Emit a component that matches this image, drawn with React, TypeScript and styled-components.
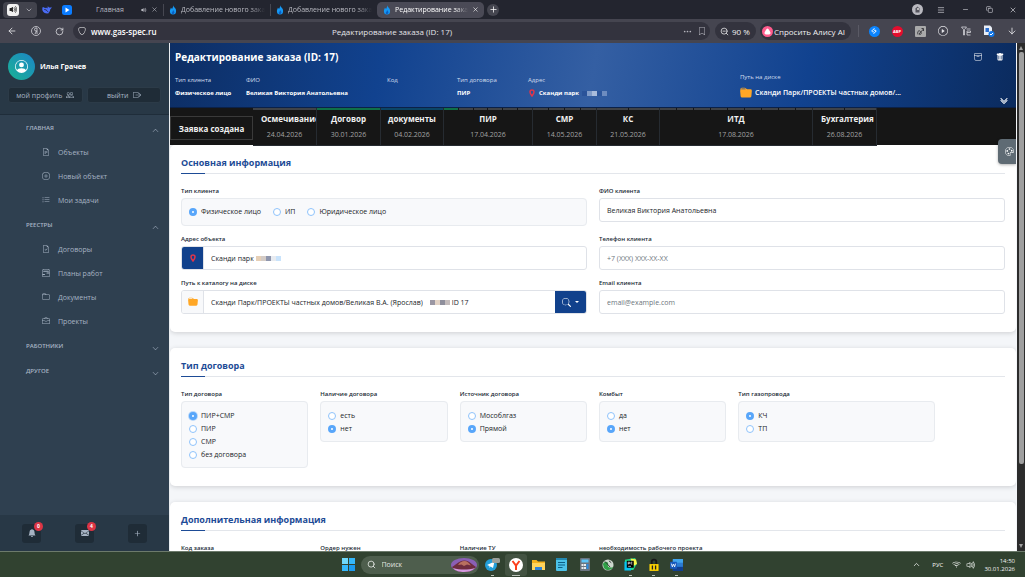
import React, {useState} from 'react';
import styled, {createGlobalStyle} from 'styled-components';
import {
    BsPersonCircle, BsPeople, BsBoxArrowRight, BsFileEarmarkText, BsPlusCircle, BsListUl,
    BsFileEarmarkCheck, BsCalendar2Range, BsFolder, BsBriefcase, BsChevronUp, BsChevronDown,
    BsBellFill, BsEnvelopeFill, BsPlus, BsPalette, BsFolderFill, BsSearch, BsArchive,
    BsTrashFill, BsChevronDoubleDown, BsBookmark, BsThreeDots, BsShield, BsWifi, BsVolumeUp,
    BsVolumeUpFill, BsPlayCircle
} from 'react-icons/bs';
import {ArrowLeft, RotateCw, X, Plus, Menu, Minus, ZoomOut, ArrowDown, Copy, ChevronDown, ChevronUp, Search} from 'lucide-react';

const GlobalStyle = createGlobalStyle`
    * { box-sizing: border-box; }
    body { margin: 0; background: #f4f6f9; }
    body, button, input { font-family: "Open Sans", "Noto Sans", sans-serif; }
    button { border: 0; padding: 0; background: none; color: inherit; cursor: pointer; }
    a { color: inherit; text-decoration: none; }
    h1, h2, p, ul, fieldset, legend { margin: 0; padding: 0; border: 0; }
    svg { flex-shrink: 0; display: block; }
`

const Screen = styled.div`
    display: flex;
    flex-direction: column;
    height: 100vh;
    overflow: hidden;
`

/* browser chrome */

const TabBar = styled.div`
    display: flex;
    align-items: center;
    height: 19px;
    flex-shrink: 0;
    padding: 0 7px 0 3px;
    background: #23252f;
    color: #d6d6dc;
    font-size: 7px;
`

const SoundGroup = styled.button`
    display: flex;
    align-items: center;
    gap: 6px;
    height: 16px;
    padding: 0 4px;
    border-radius: 4px;
    background: #42434d;
    color: #c9c9cf;
`

const SoundBox = styled.span`
    display: flex;
    align-items: center;
    justify-content: center;
    width: 12px;
    height: 12px;
    border-radius: 3px;
    background: #f1f1f1;
    color: #222;
`

const PinnedTab = styled.button`
    display: flex;
    justify-content: center;
    width: 20px;
`

const Tab = styled.div<{$active?: boolean; $short?: boolean}>`
    display: flex;
    align-items: center;
    gap: 4px;
    width: ${p => p.$short ? 86 : 107}px;
    height: 16px;
    padding: 0 5px 0 6px;
    border-radius: ${p => p.$active ? "5px" : "0"};
    background: ${p => p.$active ? "#4a4a56" : "transparent"};
    color: ${p => p.$active ? "#fff" : "#b9bac2"};
`

const TabDivider = styled.span`
    width: 1px;
    height: 12px;
    margin-right: -1px;
    background: #464751;
`

const TabTitle = styled.span<{$center?: boolean}>`
    flex: 1;
    min-width: 0;
    overflow: hidden;
    white-space: nowrap;
    text-align: ${p => p.$center ? "center" : "left"};
    mask-image: ${p => p.$center ? "none" : "linear-gradient(90deg, #000 82%, transparent)"};
`

const NewTab = styled.button`
    display: flex;
    align-items: center;
    justify-content: center;
    width: 12px;
    height: 12px;
    margin-left: 3px;
    border-radius: 50%;
    background: #454650;
    color: #fff;
`

const WindowButtons = styled.div`
    display: flex;
    align-items: center;
    gap: 14px;
    margin-left: auto;
    & > button{
        width: 10px;
        display: flex;
        justify-content: center;
    }
`

const Toolbar = styled.div`
    display: flex;
    align-items: center;
    height: 24px;
    flex-shrink: 0;
    padding: 0 7px 0 0;
    background: #454550;
    color: #e4e4e8;
    font-size: 8px;
`

const NavButtons = styled.div`
    display: flex;
    width: 73px;
    padding: 0 7px;
    gap: 14px;
    & > button{
        width: 10px;
    }
`

const AddressBar = styled.div`
    display: grid;
    grid-template-columns: 1fr auto 1fr;
    align-items: center;
    flex: 1;
    height: 18px;
    margin-right: 5px;
    padding: 0 4px 0 5px;
    border-radius: 9px;
    background: #33333e;
`

const Host = styled.span`
    display: flex;
    align-items: center;
    gap: 5px;
    color: #fff;
    font-weight: 600;
`

const BarTools = styled.span`
    display: flex;
    justify-content: flex-end;
    gap: 6px;
    color: #b4b4bc;
`

const Pill = styled.button`
    display: flex;
    align-items: center;
    gap: 3px;
    height: 18px;
    padding: 0 6px 0 5px;
    margin-right: 4px;
    border-radius: 9px;
    background: #33333e;
    color: #f0f0f2;
    font-size: 8px;
    white-space: nowrap;
`

const AlisaPill = styled(Pill)`
    gap: 1px;
    padding: 0 6px 0 2px;
`

const AlisaDot = styled.span`
    display: flex;
    align-items: center;
    justify-content: center;
    width: 11px;
    height: 11px;
    border-radius: 50%;
    background: #ff5c8d;
`

const Extensions = styled.div`
    display: flex;
    align-items: center;
    gap: 11px;
    padding-left: 9px;
    border-left: 1px solid #5a5a65;
    margin-left: 3px;
    & > button{
        width: 12px;
        display: flex;
        justify-content: center;
    }
`

const RoundBadge = styled.span<{$bg: string}>`
    display: flex;
    align-items: center;
    justify-content: center;
    width: 11px;
    height: 11px;
    flex-shrink: 0;
    border-radius: 50%;
    background: ${p => p.$bg};
    color: #fff;
    font-size: 4px;
    font-weight: 700;
`

/* page */

const Page = styled.div`
    display: flex;
    flex: 1;
    min-height: 0;
`

const Sidebar = styled.aside`
    display: flex;
    flex-direction: column;
    width: 170px;
    flex-shrink: 0;
    border-right: 1px solid #e9edf0;
    background: #2f4050;
    color: #a7b4c4;
    font-size: 7px;
`

const Profile = styled.div`
    padding: 10px 8px 11px;
    border-bottom: 1px solid #1f2d3a;
    background: #283846;
`

const ProfileName = styled.div`
    display: flex;
    align-items: center;
    gap: 5px;
    color: #fff;
    font-weight: 700;
`

const Avatar = styled.span`
    display: flex;
    align-items: center;
    justify-content: center;
    width: 27px;
    height: 27px;
    border-radius: 50%;
    background: linear-gradient(45deg, #1ab394, #1c84c6);
    color: #fff;
`

const ProfileButtons = styled.div`
    display: grid;
    grid-template-columns: 1fr 1fr;
    gap: 4px;
    margin-top: 7px;
    & > button{
        display: flex;
        align-items: center;
        justify-content: center;
        gap: 4px;
        height: 16px;
        border: 1px solid #2c3b48;
        border-radius: 3px;
        background: #1f2c37;
        color: #a7b4c4;
        font-size: 7px;
    }
`

const Menubar = styled.nav`
    flex: 1;
`

const MenuHead = styled.button`
    display: flex;
    align-items: center;
    justify-content: space-between;
    width: 100%;
    height: 25px;
    padding: 0 10px 0 26px;
    font-size: 6px;
    font-weight: 600;
    & > svg{
        margin-top: 6px;
    }
`

const MenuItem = styled.a`
    display: flex;
    align-items: center;
    gap: 8px;
    height: 24px;
    padding-left: 42px;
    font-size: 7px;
`

const SideFooter = styled.div`
    display: flex;
    align-items: center;
    justify-content: space-between;
    height: 36px;
    padding: 0 22px;
    background: #283846;
`

const SideButton = styled.button`
    position: relative;
    display: flex;
    align-items: center;
    justify-content: center;
    width: 19px;
    height: 19px;
    border-radius: 3px;
    background: #1f2c37;
    color: #a7b4c4;
`

const Badge = styled.span`
    position: absolute;
    top: -2px;
    right: -2px;
    width: 9px;
    height: 9px;
    border-radius: 50%;
    background: #dc3545;
    color: #fff;
    font-size: 5px;
    font-weight: 700;
    line-height: 9px;
    text-align: center;
`

const Main = styled.main`
    position: relative;
    flex: 1;
    min-width: 0;
    overflow: hidden;
    margin-right: 1px;
    background: #f4f6f9;
`

const OrderHeader = styled.header`
    height: 65px;
    padding: 7px 0 0 5px;
    border-bottom: 1px solid #0b2148;
    background: linear-gradient(100deg, #0d2e64 0%, #11428f 25%, #345fa3 50%, #11428f 75%, #0b2b5e 100%);
    color: #fff;
`

const TitleRow = styled.div`
    display: flex;
    justify-content: space-between;
    align-items: center;
    padding-right: 12px;
    & > h1{
        font-size: 10px;
        line-height: 14px;
        font-weight: 700;
    }
`

const HeaderTools = styled.div`
    display: flex;
    gap: 14px;
`

const Summary = styled.div`
    display: grid;
    grid-template-columns: 71fr 141fr 70fr 71fr 212fr 276fr;
    margin-top: 11px;
`

const SummaryCell = styled.div`
    font-size: 6px;
    font-weight: 700;
    line-height: 14px;
    white-space: nowrap;
    & > p{
        color: #d3deee;
        font-size: 6px;
        font-weight: 400;
        line-height: 11px;
    }
    & > a, & > span{
        display: flex;
        align-items: center;
        gap: 3px;
    }
`

const DiskCell = styled(SummaryCell)`
    position: relative;
    font-size: 7px;
    font-weight: 600;
    & > p{
        margin: -3px 0 3px;
    }
`

const Expand = styled.button`
    position: absolute;
    right: 8px;
    bottom: -5px;
    & > svg{
        stroke: currentColor;
        stroke-width: 1;
    }
`

const Mosaic = styled.span`
    display: flex;
`

const MosaicCell = styled.i<{$color: string}>`
    width: 5px;
    height: 5px;
    background: ${p => p.$color};
`

const Stages = styled.div`
    display: flex;
    height: 37px;
    background: #161616;
    color: #f1f1f1;
`

const StartStage = styled.div`
    display: flex;
    align-items: center;
    justify-content: center;
    width: 83px;
    height: 24px;
    margin-top: 8px;
    border: 1px solid #3a3a3a;
    font-size: 8px;
    font-weight: 700;
`

const Stage = styled.div<{$width: number}>`
    display: flex;
    flex-direction: column;
    width: ${p => p.$width}px;
    height: 38px;
    overflow: hidden;
    border: 1px solid #262b31;
    border-width: 0 1px 1px 0;
    background: #161616;
    text-align: center;
    white-space: nowrap;
    & > strong{
        font-size: 8px;
        line-height: 16px;
        font-weight: 700;
    }
    & > time{
        color: #a3a3a3;
        font-size: 7px;
        line-height: 16px;
    }
`

const LongTitle = styled.strong`
    padding-left: 8px;
    text-align: left;
`

const Progress = styled.div`
    display: flex;
    gap: 1px;
    height: 2px;
    margin-bottom: 1px;
`

const Segment = styled.i<{$color: string}>`
    flex: 1;
    background: ${p => p.$color};
`

const ThemeButton = styled.button`
    position: absolute;
    top: 96px;
    right: 0;
    display: flex;
    align-items: center;
    justify-content: center;
    width: 18px;
    height: 25px;
    padding-left: 5px;
    border-radius: 4px 0 0 4px;
    background: #5f6b74;
    color: #fff;
    box-shadow: 0 1px 3px rgba(0, 0, 0, .3);
`

const Card = styled.section`
    margin-bottom: 16px;
    padding: 10px 11px 18px;
    border-radius: 5px;
    background: #fff;
    box-shadow: 0 1px 5px rgba(0, 0, 0, .16);
`

const CardTitle = styled.h2`
    position: relative;
    margin-bottom: 11px;
    padding-bottom: 3px;
    border-bottom: 1px solid #e3e6eb;
    color: #1d4b96;
    font-size: 9px;
    line-height: 15px;
    font-weight: 700;
    &::after{
        content: "";
        position: absolute;
        left: 0;
        bottom: -1px;
        width: 24px;
        height: 1px;
        background: #1d4b96;
    }
`

const FormGrid = styled.div`
    display: grid;
    grid-template-columns: repeat(12, minmax(0, 1fr));
    gap: 7px 12px;
    align-items: start;
`

const Field = styled.div<{$span: number}>`
    grid-column: span ${p => p.$span};
    min-width: 0;
`

const Label = styled.label`
    display: block;
    margin-bottom: 1px;
    color: #212b36;
    font-size: 6px;
    line-height: 12px;
    font-weight: 600;
    white-space: nowrap;
`

const TextInput = styled.input`
    display: block;
    width: 100%;
    height: 24px;
    padding: 0 7px;
    border: 1px solid #dfe2e8;
    border-radius: 3px;
    background: #fff;
    color: #212529;
    font-size: 7px;
    outline: none;
    &::placeholder{
        color: #6c757d;
    }
`

const InputGroup = styled.div`
    display: flex;
    align-items: center;
    gap: 2px;
    height: 24px;
    overflow: hidden;
    border: 1px solid #dfe2e8;
    border-radius: 3px;
    background: #fff;
    color: #212529;
    font-size: 7px;
    & > input{
        field-sizing: content;
        border: 0;
        padding: 0;
        color: inherit;
        font-size: 7px;
        outline: none;
    }
`

const Addon = styled.span<{$dark?: boolean}>`
    display: flex;
    align-items: center;
    justify-content: center;
    align-self: stretch;
    width: 22px;
    margin-right: 5px;
    border-right: 1px solid #dfe2e8;
    background: ${p => p.$dark ? "#11418c" : "#f8f9fb"};
    color: #ffa726;
`

const SearchButton = styled.button`
    display: flex;
    align-items: center;
    justify-content: center;
    gap: 4px;
    align-self: stretch;
    width: 31px;
    margin-left: auto;
    background: #11418c;
    color: #fff;
`

const Caret = styled.span`
    border: 2px solid transparent;
    border-top-color: #fff;
    border-bottom: 0;
`

const RadioBox = styled.fieldset<{$row?: boolean}>`
    display: flex;
    flex-direction: ${p => p.$row ? "row" : "column"};
    gap: ${p => p.$row ? "12px" : "0"};
    padding: ${p => p.$row ? "6px 7px 7px" : "7px 7px 6px"};
    border: 1px solid #e8ebef;
    border-radius: 4px;
    background: #f8f9fb;
`

const RadioLabel = styled.label`
    display: flex;
    align-items: center;
    gap: 4px;
    height: 13px;
    color: #212529;
    font-size: 7px;
    white-space: nowrap;
`

const Radio = styled.input<{$focus?: boolean}>`
    appearance: none;
    width: 8px;
    height: 8px;
    margin: 0;
    border: 1px solid #8fc3fb;
    border-radius: 50%;
    background: #fff;
    &:checked{
        border: 3px solid #58a6fa;
        box-shadow: ${p => p.$focus ? "0 0 0 1px #b9d8fa" : "none"};
    }
`

const ScrollTrack = styled.div`
    display: flex;
    flex-direction: column;
    align-items: center;
    justify-content: space-between;
    width: 8px;
    padding: 3px 0;
    background: #2c2c2c;
`

const ScrollThumb = styled.div`
    width: 5px;
    height: 82%;
    margin: 2px 0 auto;
    border-radius: 2px;
    background: #9f9f9f;
`

const ScrollArrow = styled.span<{$down?: boolean}>`
    border: 2px solid transparent;
    border-width: ${p => p.$down ? "4px 2px 0" : "0 2px 4px"};
    border-${p => p.$down ? "top" : "bottom"}-color: #9f9f9f;
`

/* system taskbar */

const Taskbar = styled.footer`
    display: grid;
    grid-template-columns: 1fr auto 1fr;
    align-items: center;
    height: 26px;
    flex-shrink: 0;
    padding: 0 10px;
    border-top: 1px solid #6c7a6b;
    background: #314230;
    color: #f3f5f3;
`

const Apps = styled.div`
    grid-column: 2;
    display: flex;
    align-items: center;
    gap: 1px;
`

const AppButton = styled.button<{$active?: boolean; $running?: boolean}>`
    position: relative;
    display: flex;
    align-items: center;
    justify-content: center;
    width: 22px;
    height: 22px;
    border-radius: 3px;
    background: ${p => p.$active ? "#435342" : "transparent"};
    &::after{
        content: "";
        position: absolute;
        bottom: 0;
        width: ${p => p.$active ? 8 : 3}px;
        height: 1px;
        background: ${p => p.$active || p.$running ? "#bcc4bb" : "transparent"};
    }
`

const SearchBox = styled.label`
    display: flex;
    align-items: center;
    gap: 6px;
    width: 118px;
    height: 18px;
    padding: 0 2px 0 6px;
    margin-right: 2px;
    border-radius: 9px;
    background: #4e5e4d;
    & > input{
        flex: 1;
        min-width: 0;
        border: 0;
        padding: 0;
        background: none;
        font-size: 7px;
        outline: none;
    }
    & > input::placeholder{
        color: #e1e5e1;
    }
`

const Tray = styled.div`
    display: flex;
    align-items: center;
    justify-content: flex-end;
    gap: 5px;
    font-size: 6px;
    & > span{
        padding: 0 4px 0 6px;
    }
    & > time{
        padding-left: 3px;
        line-height: 8px;
        text-align: right;
    }
`

const Flame = () => (
    <svg width="8" height="10" viewBox="0 0 18 22">
        <path d="M9 0c1 5 7 7 7 13a7 8 0 0 1-14 0c0-3 2-4 2-7 2 1 2 2 3 3 1-3 3-5 2-9z" fill="#1598f4"/>
        <path d="M9 11c2 3 4 4 3 7s-6 3-6 0c0-2 3-3 3-7z" fill="#0b5fc4"/>
    </svg>
)

const Pin = () => (
    <svg width="8" height="8" viewBox="0 0 16 16">
        <path d="M8 2a4 4 0 0 1 4 4c0 3-4 8-4 8S4 9 4 6a4 4 0 0 1 4-4z" fill="none" stroke="#e0354a" strokeWidth="3"/>
    </svg>
)

const Blocks = ({colors}: {colors: string[]}) => (
    <Mosaic>{colors.map((color, i) => <MosaicCell key={i} $color={color}/>)}</Mosaic>
)

const menu = [
    {title: "ГЛАВНАЯ", open: true, items: [
        {text: "Объекты", icon: BsFileEarmarkText},
        {text: "Новый объект", icon: BsPlusCircle},
        {text: "Мои задачи", icon: BsListUl},
    ]},
    {title: "РЕЕСТРЫ", open: true, items: [
        {text: "Договоры", icon: BsFileEarmarkCheck},
        {text: "Планы работ", icon: BsCalendar2Range},
        {text: "Документы", icon: BsFolder},
        {text: "Проекты", icon: BsBriefcase},
    ]},
    {title: "РАБОТНИКИ", open: false, items: []},
    {title: "ДРУГОЕ", open: false, items: []},
]

const GREY = "#3f4247"
const GREEN = "#0f7048"

const stages = [
    {title: "Осмечивание", date: "24.04.2026", width: 64, parts: [GREY], long: true},
    {title: "Договор", date: "30.01.2026", width: 64, parts: [GREEN]},
    {title: "документы", date: "04.02.2026", width: 63, parts: ["#0b4566"]},
    {title: "ПИР", date: "17.04.2026", width: 89, parts: [GREEN, GREY, GREY, GREY, GREY, GREY]},
    {title: "СМР", date: "14.05.2026", width: 64, parts: [GREY, GREY, GREY, GREY]},
    {title: "КС", date: "21.05.2026", width: 63, parts: [GREY, GREY]},
    {title: "ИТД", date: "17.08.2026", width: 153, parts: Array(9).fill(GREY)},
    {title: "Бухгалтерия", date: "26.08.2026", width: 64, parts: [GREY, GREY], long: true},
]

const contractGroups = [
    {name: "contract", title: "Тип договора", span: 2, options: ["ПИР+СМР", "ПИР", "СМР", "без договора"], value: "ПИР+СМР", focus: true},
    {name: "signed", title: "Наличие договора", span: 2, options: ["есть", "нет"], value: "нет"},
    {name: "source", title: "Источник договора", span: 2, options: ["Мособлгаз", "Прямой"], value: "Прямой"},
    {name: "kombyt", title: "Комбыт", span: 2, options: ["да", "нет"], value: "нет"},
    {name: "pipe", title: "Тип газопровода", span: 3, options: ["КЧ", "ТП"], value: "КЧ"},
]

interface RadioGroupProps {
    name: string
    title: string
    span: number
    options: string[]
    value: string
    row?: boolean
    focus?: boolean
}

const RadioGroup: React.FunctionComponent<RadioGroupProps> = ({name, title, span, options, value, row, focus}) => {
    const [selected, setSelected] = useState(value)
    return (
        <Field $span={span}>
            <Label as="p" id={`${name}-title`}>{title}</Label>
            <RadioBox $row={row} aria-labelledby={`${name}-title`}>
                {
                    options.map((option) => (
                        <RadioLabel key={option}>
                            <Radio type="radio" name={name} $focus={focus} checked={selected === option} onChange={() => setSelected(option)}/>
                            {option}
                        </RadioLabel>
                    ))
                }
            </RadioBox>
        </Field>
    )
}

const BrowserBar = () => (
    <>
        <TabBar>
            <SoundGroup aria-label="Звук"><SoundBox><BsVolumeUpFill size={9}/></SoundBox><ChevronDown size={8}/></SoundGroup>
            <PinnedTab aria-label="Чат">
                <svg width="10" height="9" viewBox="0 0 22 20" fill="#4a6cf7">
                    <path d="M1 5c2 0 4 0 6 2 2-1 4-1 6 1-1-2-1-4 0-5 1 2 3 3 5 3l3-2c0 3-1 5-3 6 0 4-2 6-4 7l2 1c-6 2-13 0-15-6-1-3 0-4 0-7z"/>
                    <path d="M5 10c3 0 6 2 8 5" fill="none" stroke="#23252f" strokeWidth="2"/>
                </svg>
            </PinnedTab>
            <PinnedTab aria-label="Видео">
                <svg width="10" height="10" viewBox="0 0 20 20"><rect width="20" height="20" rx="5" fill="#0a7cff"/><path d="M7 5l8 5-8 5z" fill="#fff"/></svg>
            </PinnedTab>
            <Tab $short>
                <TabTitle $center>Главная</TabTitle><BsVolumeUpFill size={6}/><X size={7}/>
            </Tab>
            <TabDivider/>
            <Tab><Flame/><TabTitle>Добавление нового зака</TabTitle></Tab>
            <TabDivider/>
            <Tab><Flame/><TabTitle>Добавление нового зака</TabTitle></Tab>
            <Tab $active><Flame/><TabTitle>Редактирование зака</TabTitle><X size={7}/></Tab>
            <NewTab aria-label="Новая вкладка"><Plus size={9}/></NewTab>
            <WindowButtons>
                <button aria-label="Аккаунт">
                    <svg width="11" height="11" viewBox="0 0 22 22"><circle cx="11" cy="11" r="11" fill="#b9b9c0"/><path d="M7 17V9l4-4 4 4v8z" fill="#55555e"/><circle cx="12" cy="10" r="2" fill="#ddd"/></svg>
                </button>
                <button aria-label="Меню"><Menu size={8}/></button>
                <button aria-label="Свернуть"><Minus size={7}/></button>
                <button aria-label="Развернуть"><Copy size={7}/></button>
                <button aria-label="Закрыть"><X size={8}/></button>
            </WindowButtons>
        </TabBar>
        <Toolbar>
            <NavButtons>
                <button aria-label="Назад"><ArrowLeft size={10}/></button>
                <button aria-label="Яндекс">
                    <svg width="10" height="10" viewBox="0 0 20 20" fill="none" stroke="#d6d6dc" strokeWidth="1.6"><circle cx="10" cy="10" r="9"/><path d="M12 16V4h-2a3 3 0 0 0 0 6h2M8 16l3-6"/></svg>
                </button>
                <button aria-label="Обновить"><RotateCw size={9}/></button>
            </NavButtons>
            <AddressBar>
                <Host><BsShield size={8}/>www.gas-spec.ru</Host>
                <span>Редактирование заказа (ID: 17)</span>
                <BarTools><BsThreeDots size={9}/><BsBookmark size={8}/></BarTools>
            </AddressBar>
            <Pill><ZoomOut size={9}/>90 %</Pill>
            <AlisaPill>
                <AlisaDot><svg width="7" height="7" viewBox="0 0 14 14"><path d="M7 1c2 0 6 7 6 9s-2 3-6 3-6-1-6-3 4-9 6-9z" fill="#fff"/></svg></AlisaDot>
                Спросить Алису AI
            </AlisaPill>
            <Extensions>
                <button aria-label="Shazam">
                    <RoundBadge $bg="#0a84ff"><svg width="8" height="8" viewBox="0 0 16 16" fill="none" stroke="#fff" strokeWidth="2"><path d="M9 3L5 6c-3 3 1 5 3 3M7 13l4-3c3-3-1-5-3-3"/></svg></RoundBadge>
                </button>
                <button aria-label="Adblock"><RoundBadge $bg="#e40d2e">ABP</RoundBadge></button>
                <button aria-label="Ссылки">
                    <svg width="11" height="11" viewBox="0 0 22 22"><rect width="22" height="22" rx="2" fill="#a9a9aa"/><path d="M6 17c-2-5 1-10 5-6s-1 8-3 5l9-10M13 5h4v5" fill="none" stroke="#3d3d42" strokeWidth="2"/></svg>
                </button>
                <button aria-label="Плеер"><BsPlayCircle size={10}/></button>
                <button aria-label="Дерево">
                    <svg width="10" height="10" viewBox="0 0 20 20" fill="none" stroke="#d6d6dc" strokeWidth="1.6"><path d="M1 2h10L7 7v11H5V7zM11 6h8M12 10h7v3h-7zM12 13v5h7"/></svg>
                </button>
                <button aria-label="Документы">
                    <svg width="12" height="12" viewBox="0 0 24 24"><path d="M2 1h12l4 4v15H2z" fill="#e9eef6"/><path d="M5 6h7v8H5z" fill="#2b6fd0"/><circle cx="17" cy="18" r="6" fill="#1378e8"/><path d="M14 18l2 2 4-4" fill="none" stroke="#fff" strokeWidth="2"/></svg>
                </button>
                <button aria-label="Загрузки"><ArrowDown size={10}/></button>
            </Extensions>
        </Toolbar>
    </>
)

const SideMenu = () => (
    <Sidebar>
        <Profile>
            <ProfileName><Avatar><BsPersonCircle size={13}/></Avatar>Илья Грачев</ProfileName>
            <ProfileButtons>
                <button>мой профиль <BsPeople size={8}/></button>
                <button>выйти <BsBoxArrowRight size={8}/></button>
            </ProfileButtons>
        </Profile>
        <Menubar>
            {
                menu.map((group) => (
                    <React.Fragment key={group.title}>
                        <MenuHead>{group.title}{group.open ? <BsChevronUp size={7}/> : <BsChevronDown size={7}/>}</MenuHead>
                        {group.items.map(({text, icon: Icon}) => <MenuItem key={text} href="#"><Icon size={8}/>{text}</MenuItem>)}
                    </React.Fragment>
                ))
            }
        </Menubar>
        <SideFooter>
            <SideButton aria-label="Уведомления"><BsBellFill size={8}/><Badge>0</Badge></SideButton>
            <SideButton aria-label="Сообщения"><BsEnvelopeFill size={8}/><Badge>4</Badge></SideButton>
            <SideButton aria-label="Добавить"><BsPlus size={11}/></SideButton>
        </SideFooter>
    </Sidebar>
)

const OrderPage = () => (
    <Main>
        <OrderHeader>
            <TitleRow>
                <h1>Редактирование заказа (ID: 17)</h1>
                <HeaderTools>
                    <button aria-label="Архив"><BsArchive size={8}/></button>
                    <button aria-label="Удалить"><BsTrashFill size={8}/></button>
                </HeaderTools>
            </TitleRow>
            <Summary>
                <SummaryCell><p>Тип клиента</p>Физическое лицо</SummaryCell>
                <SummaryCell><p>ФИО</p>Великая Виктория Анатольевна</SummaryCell>
                <SummaryCell><p>Код</p></SummaryCell>
                <SummaryCell><p>Тип договора</p>ПИР</SummaryCell>
                <SummaryCell>
                    <p>Адрес</p>
                    <span><Pin/>Сканди парк<Blocks colors={["#2a5399", "#7f9bc8", "#a9bcdb", "#2c569c", "#6d8cbf"]}/></span>
                </SummaryCell>
                <DiskCell>
                    <p>Путь на диске</p>
                    <a href="#"><BsFolderFill size={12} color="#ffa726"/>Сканди Парк/ПРОЕКТЫ частных домов/...</a>
                    <Expand aria-label="Развернуть сведения"><BsChevronDoubleDown size={8}/></Expand>
                </DiskCell>
            </Summary>
        </OrderHeader>
        <Stages>
            <StartStage>Заявка создана</StartStage>
            {
                stages.map((stage) => (
                    <Stage key={stage.title} $width={stage.width}>
                        <Progress>{stage.parts.map((color, i) => <Segment key={i} $color={color}/>)}</Progress>
                        {stage.long ? <LongTitle>{stage.title}</LongTitle> : <strong>{stage.title}</strong>}
                        <time>{stage.date}</time>
                    </Stage>
                ))
            }
        </Stages>
        <Card>
            <CardTitle>Основная информация</CardTitle>
            <FormGrid>
                <RadioGroup name="client" title="Тип клиента" span={6} row options={["Физическое лицо", "ИП", "Юридическое лицо"]} value="Физическое лицо"/>
                <Field $span={6}>
                    <Label htmlFor="fio">ФИО клиента</Label>
                    <TextInput id="fio" defaultValue="Великая Виктория Анатольевна"/>
                </Field>
                <Field $span={6}>
                    <Label htmlFor="address">Адрес объекта</Label>
                    <InputGroup>
                        <Addon $dark><Pin/></Addon>
                        <input id="address" defaultValue="Сканди парк"/>
                        <Blocks colors={["#e6cfb6", "#d3cbc6", "#8f96ad", "#e8ebf0", "#c9e3fb"]}/>
                    </InputGroup>
                </Field>
                <Field $span={6}>
                    <Label htmlFor="phone">Телефон клиента</Label>
                    <TextInput id="phone" placeholder="+7 (XXX) XXX-XX-XX"/>
                </Field>
                <Field $span={6}>
                    <Label htmlFor="path">Путь к каталогу на диске</Label>
                    <InputGroup>
                        <Addon><BsFolderFill size={10}/></Addon>
                        <input id="path" defaultValue="Сканди Парк/ПРОЕКТЫ частных домов/Великая В.А. (Ярослав)"/>
                        <Blocks colors={["transparent", "#9b97a3", "#e3d3c6", "#8f8f9c", "#c4bcbc"]}/>
                        ID 17
                        <SearchButton aria-label="Найти"><BsSearch size={9}/><Caret/></SearchButton>
                    </InputGroup>
                </Field>
                <Field $span={6}>
                    <Label htmlFor="email">Email клиента</Label>
                    <TextInput id="email" type="email" placeholder="email@example.com"/>
                </Field>
            </FormGrid>
        </Card>
        <Card>
            <CardTitle>Тип договора</CardTitle>
            <FormGrid>
                {contractGroups.map((group) => <RadioGroup key={group.name} {...group}/>)}
            </FormGrid>
        </Card>
        <Card>
            <CardTitle>Дополнительная информация</CardTitle>
            <FormGrid>
                <Field $span={2}><Label htmlFor="code">Код заказа</Label><TextInput id="code"/></Field>
                <Field $span={2}><Label htmlFor="order">Ордер нужен</Label><TextInput id="order"/></Field>
                <Field $span={2}><Label htmlFor="tu">Наличие ТУ</Label><TextInput id="tu"/></Field>
                <Field $span={3}><Label htmlFor="draft">необходимость рабочего проекта</Label><TextInput id="draft"/></Field>
            </FormGrid>
        </Card>
        <ThemeButton aria-label="Тема"><BsPalette size={9}/></ThemeButton>
    </Main>
)

const SystemBar = () => (
    <Taskbar>
        <Apps>
            <AppButton aria-label="Пуск">
                <svg width="13" height="13" viewBox="0 0 26 26" fill="#35b8fb"><path d="M0 0h12v12H0z" fill="#6fd8fc"/><path d="M14 0h12v12H14zM0 14h12v12H0z"/><path d="M14 14h12v12H14z" fill="#1c9bf0"/></svg>
            </AppButton>
            <SearchBox>
                <Search size={9}/>
                <input placeholder="Поиск" aria-label="Поиск"/>
                <svg width="26" height="14" viewBox="0 0 52 28">
                    <ellipse cx="26" cy="14" rx="26" ry="14" fill="#8a5fb5"/>
                    <path d="M2 18C12 12 16 6 26 5s16 8 24 13c-4 6-14 10-24 10S6 24 2 18z" fill="#6e2c3e"/>
                    <path d="M14 14c4-6 8-8 13-8s9 4 13 9l-8-2-6 3-5-3z" fill="#b8705f"/>
                    <path d="M4 20c14 4 30 4 44 0-6 6-14 8-22 8S8 26 4 20z" fill="#d49adf"/>
                </svg>
            </SearchBox>
            <AppButton aria-label="Telegram" $running>
                <svg width="15" height="13" viewBox="0 0 30 26"><circle cx="12" cy="14" r="12" fill="#229ed9"/><path d="M4 14l15-7-3 13-5-3-2 3v-4z" fill="#fff"/><rect x="14" y="0" width="16" height="10" rx="3" fill="#9aa09b"/></svg>
            </AppButton>
            <AppButton aria-label="Яндекс Браузер" $active>
                <svg width="14" height="14" viewBox="0 0 28 28"><circle cx="14" cy="14" r="14" fill="#fff"/><path d="M7 6l7 9 7-9M14 14v10" fill="none" stroke="#fc3f1d" strokeWidth="4"/></svg>
            </AppButton>
            <AppButton aria-label="Проводник">
                <svg width="13" height="12" viewBox="0 0 26 24"><path d="M0 2h9l3 3h14v17H0z" fill="#f5b21d"/><path d="M0 8h26v14H0z" fill="#ffd45c"/><path d="M6 16h14v6H6z" fill="#2f83d8"/></svg>
            </AppButton>
            <AppButton aria-label="Блокнот">
                <svg width="11" height="13" viewBox="0 0 22 26"><rect width="22" height="26" rx="2" fill="#4cc2e8"/><path d="M0 0h22v4H0z" fill="#2389b0"/><path d="M4 9h14M4 14h14M4 19h9" stroke="#0c5f86" strokeWidth="2"/></svg>
            </AppButton>
            <AppButton aria-label="Калькулятор">
                <svg width="10" height="13" viewBox="0 0 20 26"><rect width="20" height="26" rx="2" fill="#6b7580"/><path d="M3 3h14v6H3z" fill="#5ec4f7"/><path d="M3 12h4v4H3zM8 12h4v4H8zM3 18h4v4H3zM8 18h4v4H8z" fill="#e8ebee"/><path d="M13 12h4v10h-4z" fill="#2b8be0"/></svg>
            </AppButton>
            <AppButton aria-label="Монитор">
                <svg width="12" height="12" viewBox="0 0 26 26"><circle cx="13" cy="13" r="12" fill="#cfd8cf"/><path d="M2 11C6 3 15 6 13 12s5 9 11 5c-3 8-15 10-20 2z" fill="#2f9f46"/><path d="M6 5l12 13M15 4l5 4" stroke="#333" strokeWidth="2"/></svg>
            </AppButton>
            <AppButton aria-label="PyCharm" $running>
                <svg width="13" height="13" viewBox="0 0 28 28"><path d="M2 4L24 0l4 12-8 14H2z" fill="#21d789"/><path d="M14 1l12 2 2 10-8 4z" fill="#fcf84a"/><path d="M1 8h14v19H1z" fill="#07c3f2"/><path d="M6 6h15v15H6z" fill="#000"/><path d="M9 18h6M9 14V9h3v3H9M18 9h-3v4h3" stroke="#fff" strokeWidth="1.4" fill="none"/></svg>
            </AppButton>
            <AppButton aria-label="Замок" $running>
                <svg width="10" height="14" viewBox="0 0 22 28"><path d="M6 13V7a5 5 0 0 1 10 0v6" fill="none" stroke="#161616" strokeWidth="4"/><rect x="1" y="12" width="20" height="15" fill="#ffd400"/><path d="M6 15h3v9H6zM13 15h3v9h-3z" fill="#222"/></svg>
            </AppButton>
            <AppButton aria-label="Word" $running>
                <svg width="13" height="12" viewBox="0 0 28 26"><rect x="6" width="22" height="26" rx="2" fill="#2b7cd3"/><path d="M6 0h22v8H6z" fill="#41a5ee"/><path d="M6 17h22v9H6z" fill="#103f91"/><rect y="6" width="15" height="15" rx="1" fill="#185abd"/><path d="M3 10l2 7 2.500-6 2.500 6 2-7" fill="none" stroke="#fff" strokeWidth="1.800"/></svg>
            </AppButton>
        </Apps>
        <Tray>
            <ChevronUp size={9}/><span>РУС</span><BsWifi size={9}/><BsVolumeUp size={10}/>
            <time>14:50<br/>30.01.2026</time>
        </Tray>
    </Taskbar>
)

const App: React.FunctionComponent = () => {
    return (
        <Screen>
            <GlobalStyle/>
            <BrowserBar/>
            <Page>
                <SideMenu/>
                <OrderPage/>
                <ScrollTrack><ScrollArrow/><ScrollThumb/><ScrollArrow $down/></ScrollTrack>
            </Page>
            <SystemBar/>
        </Screen>
    );
}

export default App;
